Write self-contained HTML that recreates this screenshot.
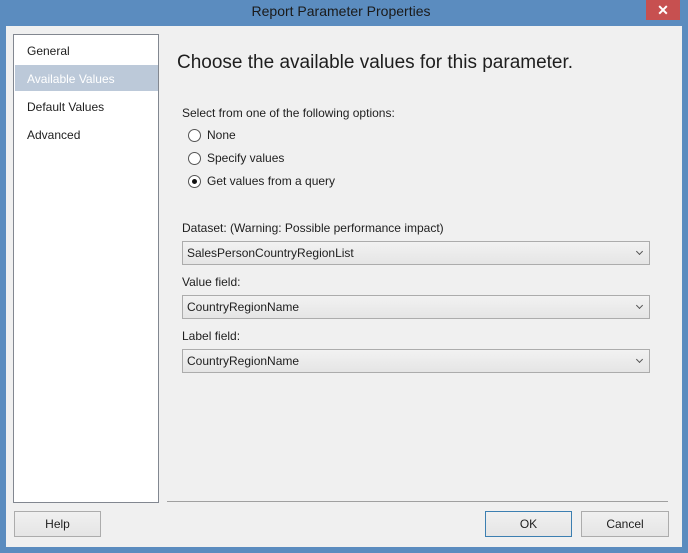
<!DOCTYPE html>
<html><head><style>
*{margin:0;padding:0;box-sizing:border-box}
body{width:688px;height:553px;background:#5b8cbf;position:relative;overflow:hidden;font-family:"Liberation Sans",sans-serif;font-size:12px;color:#1e1e1e}
.a{position:absolute}
.title{left:0;top:3px;width:682px;text-align:center;font-size:14px;color:#1a1a1a}
.close{left:646px;top:0;width:34px;height:20px;background:#c75050;color:#fff;text-align:center;font-size:14px;line-height:20px;font-weight:bold}
.client{left:6px;top:26px;width:676px;height:521px;background:#f0f0f0}
.list{left:13px;top:34px;width:146px;height:469px;background:#fff;border:1px solid #828790}
.item{left:1px;width:143px;height:26px;padding-left:12px;line-height:28px}
.sel{background:#bcc9d9;color:#fff}
.hd{left:177px;top:52px;font-size:19px;color:#1e1e1e}
.radio{width:13px;height:13px;border:1px solid #555;border-radius:50%;background:#fff}
.dot{position:absolute;left:3px;top:3px;width:5px;height:5px;border-radius:50%;background:#111}
.dd{left:182px;width:468px;height:24px;border:1px solid #acacac;background:linear-gradient(#f2f2f2,#e5e5e5);padding-left:4px;line-height:22px}
.dd:after{content:"";position:absolute;right:7px;top:7px;width:4px;height:4px;border-right:1.5px solid #555;border-bottom:1.5px solid #555;transform:rotate(45deg)}
.sep{left:167px;top:501px;width:501px;height:1px;background:#a0a0a0}
.btn{top:511px;height:26px;border:1px solid #acacac;background:linear-gradient(#f0f0f0,#e5e5e5);text-align:center;line-height:24px}
</style></head><body>
<div class="a title">Report Parameter Properties</div>
<div class="a close">✕</div>
<div class="a client"></div>
<div class="a list">
<div class="a item" style="top:2px">General</div>
<div class="a item sel" style="top:30px">Available Values</div>
<div class="a item" style="top:58px">Default Values</div>
<div class="a item" style="top:86px">Advanced</div>
</div>
<div class="a hd">Choose the available values for this parameter.</div>
<div class="a" style="left:182px;top:106px">Select from one of the following options:</div>
<div class="a radio" style="left:188px;top:129px"></div><div class="a" style="left:207px;top:128px">None</div>
<div class="a radio" style="left:188px;top:152px"></div><div class="a" style="left:207px;top:151px">Specify values</div>
<div class="a radio" style="left:188px;top:175px"><div class="dot"></div></div><div class="a" style="left:207px;top:174px">Get values from a query</div>
<div class="a" style="left:182px;top:221px">Dataset: (Warning: Possible performance impact)</div>
<div class="a dd" style="top:241px">SalesPersonCountryRegionList</div>
<div class="a" style="left:182px;top:275px">Value field:</div>
<div class="a dd" style="top:295px">CountryRegionName</div>
<div class="a" style="left:182px;top:329px">Label field:</div>
<div class="a dd" style="top:349px">CountryRegionName</div>
<div class="a sep"></div>
<div class="a btn" style="left:14px;width:87px">Help</div>
<div class="a btn" style="left:485px;width:87px;border-color:#3c7fb1">OK</div>
<div class="a btn" style="left:581px;width:88px">Cancel</div>
</body></html>
